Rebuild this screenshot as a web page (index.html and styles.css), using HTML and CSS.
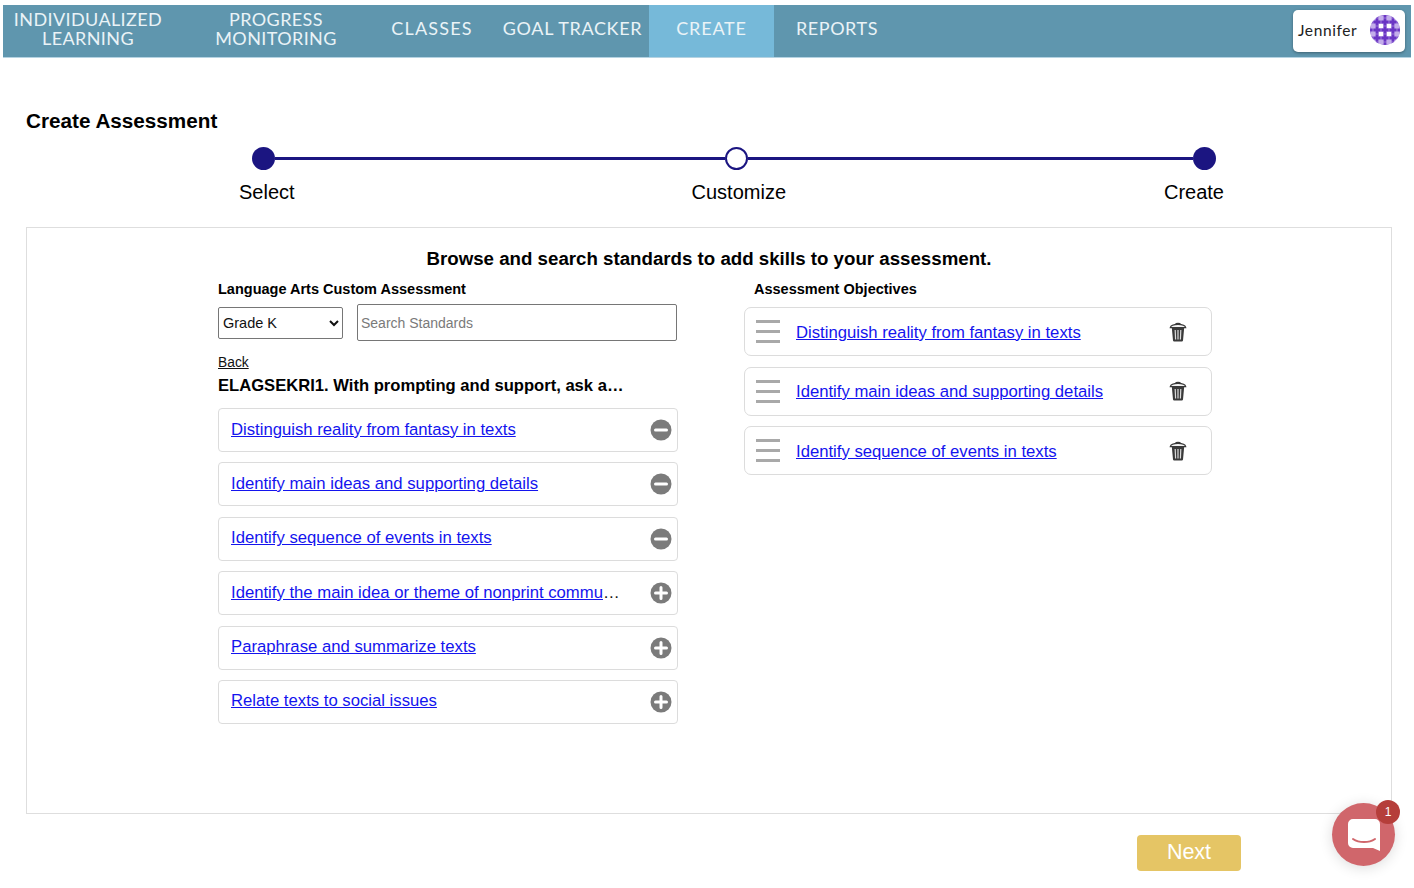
FILE: index.html
```html
<!DOCTYPE html>
<html lang="en">
<head>
<meta charset="utf-8">
<title>Create Assessment</title>
<link rel="stylesheet" href="styles.css">
</head>
<body>
<nav class="nav">
  <a class="nav-item w1">INDIVIDUALIZED<br>LEARNING</a>
  <a class="nav-item w2">PROGRESS<br>MONITORING</a>
  <a class="nav-item w3">CLASSES</a>
  <a class="nav-item w4">GOAL TRACKER</a>
  <a class="nav-item w5 active">CREATE</a>
  <a class="nav-item w6">REPORTS</a>
  <div class="user">
    <span>Jennifer</span>
    <svg class="avatar" viewBox="0 0 32 32" width="32" height="32" aria-hidden="true">
      <defs>
        <pattern id="dots" width="8" height="8" patternUnits="userSpaceOnUse" x="-4" y="-4">
          <path d="M4 .3v7.400M.3 4h7.400" stroke="#6a35c4" stroke-width="2.800"/>
        </pattern>
        <clipPath id="round"><circle cx="16" cy="16" r="15"/></clipPath>
      </defs>
      <circle cx="16" cy="16" r="15" fill="#c3adea"/>
      <rect width="32" height="32" fill="url(#dots)" clip-path="url(#round)"/>
      <g fill="#fff"><rect x="10" y="10" width="4" height="4"/><rect x="18" y="10" width="4" height="4"/><rect x="10" y="18" width="4" height="4"/><rect x="18" y="18" width="4" height="4"/></g>
    </svg>
  </div>
</nav>

<main class="page">
  <h1 class="title">Create Assessment</h1>

  <div class="stepper">
    <div class="track">
      <span class="dot"></span><span class="line line-a"></span>
      <span class="dot hollow"></span><span class="line line-b"></span>
      <span class="dot"></span>
    </div>
    <div class="step-labels">
      <span>Select</span><span class="step-mid">Customize</span><span>Create</span>
    </div>
  </div>

  <section class="card">
    <h2 class="card-head">Browse and search standards to add skills to your assessment.</h2>
    <div class="columns">
      <div class="left">
        <h3 class="label">Language Arts Custom Assessment</h3>
        <div class="filters">
          <select class="grade"><option>Grade K</option></select>
          <input class="search" type="text" placeholder="Search Standards">
        </div>
        <a class="back">Back</a>
        <p class="standard">ELAGSEKRI1. With prompting and support, ask a…</p>
        <ul class="skills">
          <li class="skill"><a class="link">Distinguish reality from fantasy in texts</a><svg class="round" viewBox="0 0 22 22" width="22" height="22"><circle cx="11" cy="11" r="10.500" fill="#7b7b7b"/><path d="M5.500 11h11" stroke="#fff" stroke-width="3" stroke-linecap="round"/></svg></li>
          <li class="skill"><a class="link">Identify main ideas and supporting details</a><svg class="round" viewBox="0 0 22 22" width="22" height="22"><circle cx="11" cy="11" r="10.500" fill="#7b7b7b"/><path d="M5.500 11h11" stroke="#fff" stroke-width="3" stroke-linecap="round"/></svg></li>
          <li class="skill"><a class="link">Identify sequence of events in texts</a><svg class="round" viewBox="0 0 22 22" width="22" height="22"><circle cx="11" cy="11" r="10.500" fill="#7b7b7b"/><path d="M5.500 11h11" stroke="#fff" stroke-width="3" stroke-linecap="round"/></svg></li>
          <li class="skill"><a class="link clip">Identify the main idea or theme of nonprint commu</a><span class="more">…</span><svg class="round" viewBox="0 0 22 22" width="22" height="22"><circle cx="11" cy="11" r="10.500" fill="#7b7b7b"/><path d="M5.500 11h11M11 5.500v11" stroke="#fff" stroke-width="3" stroke-linecap="round"/></svg></li>
          <li class="skill"><a class="link">Paraphrase and summarize texts</a><svg class="round" viewBox="0 0 22 22" width="22" height="22"><circle cx="11" cy="11" r="10.500" fill="#7b7b7b"/><path d="M5.500 11h11M11 5.500v11" stroke="#fff" stroke-width="3" stroke-linecap="round"/></svg></li>
          <li class="skill"><a class="link">Relate texts to social issues</a><svg class="round" viewBox="0 0 22 22" width="22" height="22"><circle cx="11" cy="11" r="10.500" fill="#7b7b7b"/><path d="M5.500 11h11M11 5.500v11" stroke="#fff" stroke-width="3" stroke-linecap="round"/></svg></li>
        </ul>
      </div>
      <div class="right">
        <h3 class="label label-right">Assessment Objectives</h3>
        <ul class="objectives">
          <li class="objective"><span class="grip"><i></i><i></i><i></i></span><a class="link">Distinguish reality from fantasy in texts</a><svg class="trash" viewBox="0 0 18 20" width="18" height="20"><path d="M1.300 5.600C1.800 3.200 5 2.400 9 2.400s7.200.8 7.700 3.200zM6.500 2.200C7 1 11 1 11.500 2.200" fill="#f4f4f4" stroke="#3a3a3a" stroke-width="1.200"/><path d="M2.800 5.800h12.400l-1.200 12.700a1.200 1.200 0 0 1-1.200 1H5.200a1.200 1.200 0 0 1-1.200-1z" fill="#3a3a3a"/><path d="M6.200 8l.4 9.500M9 8v9.500M11.800 8l-.4 9.500" stroke="#dcdcdc" stroke-width="1.200"/></svg></li>
          <li class="objective"><span class="grip"><i></i><i></i><i></i></span><a class="link">Identify main ideas and supporting details</a><svg class="trash" viewBox="0 0 18 20" width="18" height="20"><path d="M1.300 5.600C1.800 3.200 5 2.400 9 2.400s7.200.8 7.700 3.200zM6.500 2.200C7 1 11 1 11.500 2.200" fill="#f4f4f4" stroke="#3a3a3a" stroke-width="1.200"/><path d="M2.800 5.800h12.400l-1.200 12.700a1.200 1.200 0 0 1-1.200 1H5.200a1.200 1.200 0 0 1-1.200-1z" fill="#3a3a3a"/><path d="M6.200 8l.4 9.500M9 8v9.500M11.800 8l-.4 9.500" stroke="#dcdcdc" stroke-width="1.200"/></svg></li>
          <li class="objective"><span class="grip"><i></i><i></i><i></i></span><a class="link">Identify sequence of events in texts</a><svg class="trash" viewBox="0 0 18 20" width="18" height="20"><path d="M1.300 5.600C1.800 3.200 5 2.400 9 2.400s7.200.8 7.700 3.200zM6.500 2.200C7 1 11 1 11.500 2.200" fill="#f4f4f4" stroke="#3a3a3a" stroke-width="1.200"/><path d="M2.800 5.800h12.400l-1.200 12.700a1.200 1.200 0 0 1-1.200 1H5.200a1.200 1.200 0 0 1-1.200-1z" fill="#3a3a3a"/><path d="M6.200 8l.4 9.500M9 8v9.500M11.800 8l-.4 9.500" stroke="#dcdcdc" stroke-width="1.200"/></svg></li>
        </ul>
      </div>
    </div>
  </section>

  <div class="actions"><button class="next" type="button">Next</button></div>
</main>

<div class="chat">
  <svg viewBox="0 0 32 32" width="32" height="32" aria-hidden="true">
    <path d="M5 0h22a5 5 0 0 1 5 5v27l-7-3H5a5 5 0 0 1-5-5V5a5 5 0 0 1 5-5z" fill="#fff"/>
    <path d="M5 20c6 4 16 4 22 0" fill="none" stroke="#d0666b" stroke-width="2" stroke-linecap="round"/>
  </svg>
  <span class="badge">1</span>
</div>
</body>
</html>
```
FILE: styles.css
```css
* { box-sizing: border-box; }
html, body { margin: 0; height: 100%; }
body {
  background: #fff;
  color: #000;
  font-family: "Liberation Sans", Arial, sans-serif;
  overflow: hidden;
  padding-top: 5px;
}
ul { list-style: none; margin: 0; padding: 0; }
h1, h2, h3, p { margin: 0; }

.nav {
  display: flex;
  align-items: stretch;
  height: 53px;
  margin: 0 3px;
  background: #5f96ae;
  border-bottom: 1px solid #b5d3e2;
}
.nav-item {
  display: flex;
  align-items: center;
  justify-content: center;
  padding-bottom: 4px;
  text-align: center;
  white-space: nowrap;
  color: #eaf3f7;
  font-family: Lato, "Open Sans", sans-serif;
  font-size: 18px;
  line-height: 19.5px;
  letter-spacing: .4px;
}
.w1 { width: 170px; }
.w2 { width: 206px; }
.w3 { width: 106px; letter-spacing: 1.200px; }
.w4 { width: 164px; padding-left: 11px; letter-spacing: .65px; }
.w5 { width: 125px; letter-spacing: .8px; }
.w6 { width: 126px; letter-spacing: .55px; }
.active { background: #76b9d9; }
.user {
  margin: 5px 6px 5px auto;
  width: 112px;
  height: 42px;
  display: flex;
  align-items: center;
  justify-content: space-between;
  padding: 0 4px 2px 5px;
  background: #fff;
  border-radius: 5px;
  box-shadow: 0 1px 3px rgba(0,0,0,.35);
  font-family: Lato, sans-serif;
  font-size: 15.5px;
  letter-spacing: .6px;
  color: #222;
}
.avatar { display: block; }

.page { padding: 0 22px 0 26px; }
.title {
  margin-top: 51px;
  font-size: 20.7px;
  line-height: 24px;
  font-weight: 700;
}
.stepper { margin: 14px 0 0 199px; width: 1000px; }
.track {
  display: flex;
  align-items: center;
  width: 964px;
  margin-left: 27px;
}
.dot {
  width: 23px;
  height: 23px;
  flex: none;
  border-radius: 50%;
  background: #1b1581;
}
.dot.hollow { background: #fff; border: 2px solid #1b1581; }
.line { height: 3px; background: #1b1581; }
.line-a { flex: 450; }
.line-b { flex: 445; }
.step-labels {
  display: flex;
  justify-content: space-between;
  width: 985px;
  margin: 10px 0 0 14px;
  font-size: 20px;
  line-height: 24px;
}
.step-mid { margin-left: 19px; }
.card {
  margin-top: 23px;
  height: 587px;
  border: 1px solid #dedede;
  padding: 19px 0 0 191px;
}
.card-head {
  margin-left: -191px;
  text-align: center;
  font-size: 18.7px;
  line-height: 24px;
  font-weight: 700;
}
.columns { display: flex; margin-top: 9px; }
.left { width: 460px; }
.right { width: 468px; margin-left: 66px; }
.label { font-size: 14.5px; line-height: 18px; font-weight: 700; }
.label-right { margin-left: 10px; }
.filters { display: flex; align-items: flex-start; gap: 14px; margin-top: 6px; }
.grade {
  width: 125px;
  height: 32px;
  margin-top: 3px;
  padding-left: 0;
  font: 14.5px "Liberation Sans", Arial, sans-serif;
  background: #fff;
  color: #111;
  border: 1px solid #767676;
  border-radius: 2px;
}
.search {
  width: 320px;
  height: 37px;
  padding: 0 3px;
  font: 14px "Liberation Sans", Arial, sans-serif;
  border: 1px solid #767676;
  border-radius: 2px;
}
.search::placeholder { color: #7a7a7a; }
.back {
  display: block;
  margin-top: 14px;
  font-size: 13.8px;
  line-height: 16px;
  text-decoration: underline;
  color: #111;
}
.standard {
  margin-top: 4px;
  font-size: 16.6px;
  line-height: 21px;
  font-weight: 700;
  white-space: nowrap;
}
.skills { display: flex; flex-direction: column; gap: 10.4px; margin-top: 12px; }
.skill {
  display: flex;
  align-items: center;
  height: 44px;
  padding: 0 5.500px 0 12px;
  border: 1px solid #dcdcdc;
  border-radius: 4px;
}
.skill .link, .skill .more { margin-bottom: 1px; }
.link {
  color: #1414ee;
  font-size: 16.7px;
  line-height: 20px;
  text-decoration: underline;
  white-space: nowrap;
}
.objective .link { margin-top: 2px; }
.more { font-size: 16.7px; color: #111; }
.round { margin-left: auto; display: block; flex: none; }
.objectives { display: flex; flex-direction: column; gap: 10.5px; margin-top: 9px; }
.objective {
  display: flex;
  align-items: center;
  height: 49px;
  padding: 0 24px 0 11px;
  border: 1px solid #dcdcdc;
  border-radius: 7px;
}
.grip { display: flex; flex-direction: column; gap: 7px; width: 24px; margin-right: 16px; }
.grip i { display: block; height: 3px; background: #a9a9a9; }
.trash { margin-left: auto; display: block; }
.actions { display: flex; justify-content: flex-end; padding-right: 151px; margin-top: 21px; }
.next {
  width: 104px;
  height: 36px;
  border: 0;
  border-radius: 4px;
  padding: 0 0 2px;
  background: #e5c565;
  color: #fff;
  font: 21.5px "Liberation Sans", Arial, sans-serif;
}
.chat {
  position: absolute;
  left: 1332px;
  top: 803px;
  width: 63px;
  height: 63px;
  border-radius: 50%;
  background: #d0666b;
  box-shadow: 0 2px 14px rgba(0,0,0,.14);
  display: flex;
  align-items: center;
  justify-content: center;
}
.badge {
  position: absolute;
  right: -5px;
  top: -3px;
  width: 24px;
  height: 24px;
  border-radius: 50%;
  background: #b53e3a;
  color: #fff;
  font-size: 12px;
  line-height: 24px;
  text-align: center;
}
```
